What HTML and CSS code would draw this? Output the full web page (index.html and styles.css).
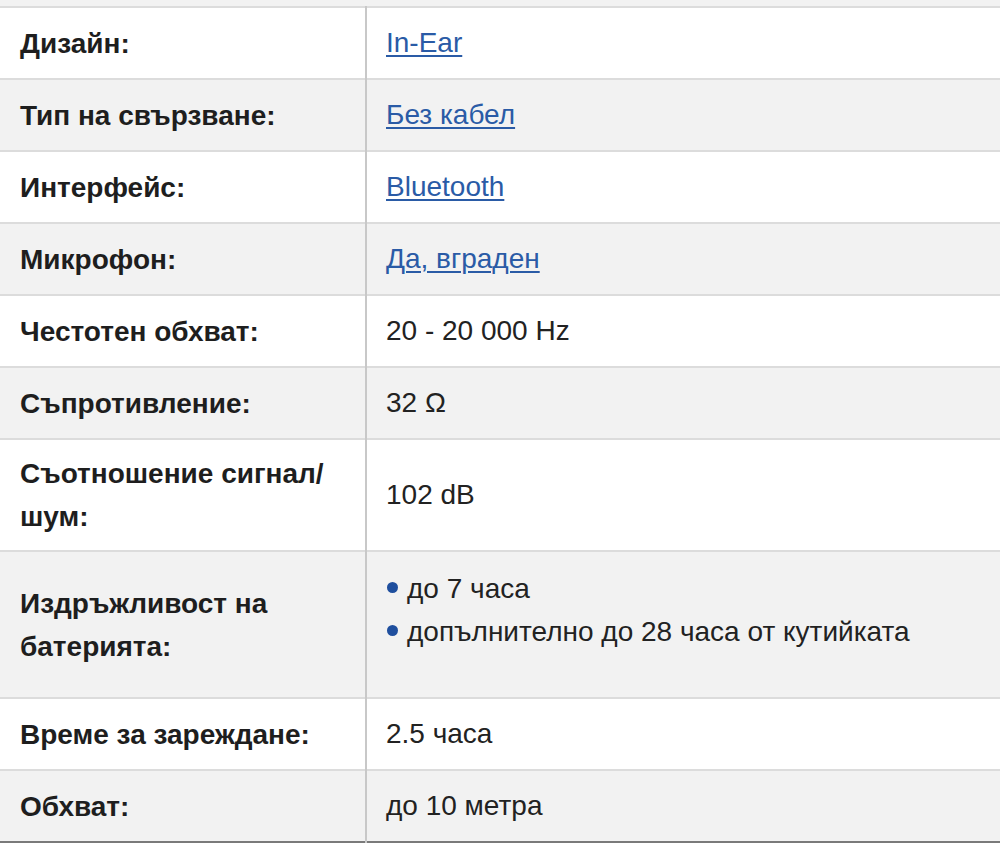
FILE: index.html
```html
<!DOCTYPE html>
<html lang="bg">
<head>
<meta charset="utf-8">
<title>Спецификации</title>
<link rel="stylesheet" href="styles.css">
</head>
<body>
<div class="prev-row"></div>
<table class="specs">
  <tbody>
    <tr><th>Дизайн:</th><td><a href="#">In-Ear</a></td></tr>
    <tr><th>Тип на свързване:</th><td><a href="#">Без кабел</a></td></tr>
    <tr><th>Интерфейс:</th><td><a href="#">Bluetooth</a></td></tr>
    <tr><th>Микрофон:</th><td><a href="#">Да, вграден</a></td></tr>
    <tr><th>Честотен обхват:</th><td>20 - 20 000 Hz</td></tr>
    <tr><th>Съпротивление:</th><td>32 Ω</td></tr>
    <tr><th>Съотношение сигнал/<br>шум:</th><td>102 dB</td></tr>
    <tr><th>Издръжливост на<br>батерията:</th><td>
      <ul class="bullets">
        <li>до 7 часа</li>
        <li>допълнително до 28 часа от кутийката</li>
      </ul>
    </td></tr>
    <tr><th>Време за зареждане:</th><td>2.5 часа</td></tr>
    <tr><th>Обхват:</th><td>до 10 метра</td></tr>
  </tbody>
</table>
</body>
</html>
```
FILE: styles.css
```css
html, body {
  margin: 0;
  padding: 0;
  background: #ffffff;
}

body {
  font-family: "Liberation Sans", Arial, Helvetica, sans-serif;
  font-size: 28px;
  line-height: 40px;
  color: #222222;
}

.prev-row {
  height: 6px;
  background: #f2f2f2;
}

.specs {
  width: 1000px;
  border-collapse: collapse;
  border-top: 2px solid #dcdcdc;
  border-bottom: 2px solid #7a7a7a;
}

.specs tr {
  border-bottom: 2px solid #dcdcdc;
}

.specs tr:last-child {
  border-bottom: none;
}

.specs tr:nth-child(even) {
  background: #f2f2f2;
}

.specs th,
.specs td {
  vertical-align: middle;
  text-align: left;
}

.specs th {
  width: 345px;
  padding: 12px 0 12px 20px;
  line-height: 43px;
  font-weight: bold;
  color: #1e1e1e;
  border-right: 2px solid #c8c8c8;
}

.specs td {
  padding: 15px 0 15px 19px;
  font-weight: normal;
}

.specs a {
  color: #2a5ba6;
  text-decoration: underline;
  text-decoration-thickness: 2px;
  text-underline-offset: 3px;
}

.bullets {
  list-style: none;
  margin: 0 0 29px 0;
  padding: 0;
}

.bullets li {
  position: relative;
  padding-left: 21px;
  line-height: 43px;
}

.bullets li::before {
  content: "";
  position: absolute;
  left: 1px;
  top: 15px;
  width: 11px;
  height: 11px;
  border-radius: 50%;
  background: #1f4f9e;
}
```
